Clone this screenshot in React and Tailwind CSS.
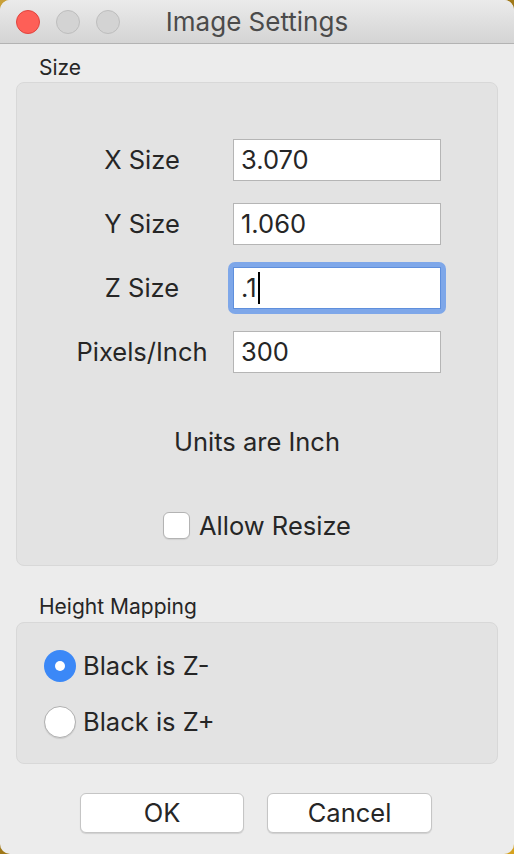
import { useState } from "react";

const FONT = { fontFamily: "Inter, 'Noto Sans', 'Liberation Sans', sans-serif" };

function Field({ label, value, focused }) {
  return (
    <div className="flex items-center h-[42px]">
      <div className="w-[250px] text-center text-[25.5px] text-[#262626] leading-none">{label}</div>
      <div className="-ml-[34px] relative">
        {focused && (
          <div className="absolute -inset-[5px] rounded-[7px] bg-[#7ea7e9]" />
        )}
        <div
          className={`relative w-[208px] h-[42px] bg-white flex items-center pl-[7px] text-[25.5px] text-[#262626] border ${
            focused ? "border-[#5f8fdc]" : "border-[#b5b5b5]"
          }`}
        >
          <span>{value}</span>
          {focused && <span className="ml-[1px] w-[2px] h-[32px] bg-black" />}
        </div>
      </div>
    </div>
  );
}

function Radio({ checked, label }) {
  return (
    <div className="flex items-center h-[32px]">
      {checked ? (
        <div className="w-[32px] h-[32px] rounded-full bg-[#3b88f7] flex items-center justify-center">
          <div className="w-[10px] h-[10px] rounded-full bg-white" />
        </div>
      ) : (
        <div className="w-[32px] h-[32px] rounded-full bg-white border border-[#b0b0b0] shadow-[0_1px_1px_rgba(0,0,0,0.1)]" />
      )}
      <span className="ml-[7px] text-[25.5px] text-[#262626]">{label}</span>
    </div>
  );
}

export default function App() {
  const [allowResize, setAllowResize] = useState(false);

  return (
    <div
      className="w-[514px] h-[854px] bg-gradient-to-br from-[#c9a03a] via-[#a07818] to-[#d6a21e]"
      style={FONT}
    >
      <div className="w-full h-full rounded-[10px] overflow-hidden bg-[#ececec] flex flex-col">
        {/* title bar */}
        <div className="h-[44px] shrink-0 bg-gradient-to-b from-[#ebebeb] to-[#d4d4d4] border-b border-[#b3b3b3] flex items-center relative">
          <div className="flex items-center gap-[16px] pl-[16px]">
            <div className="w-[24px] h-[24px] rounded-full bg-[#fe5f57] border border-[#e0443e]" />
            <div className="w-[24px] h-[24px] rounded-full bg-[#d3d3d3] border border-[#bdbdbd]" />
            <div className="w-[24px] h-[24px] rounded-full bg-[#d3d3d3] border border-[#bdbdbd]" />
          </div>
          <div className="absolute inset-0 flex items-center justify-center text-[26px] text-[#4b4b4b] pointer-events-none">
            Image Settings
          </div>
        </div>

        <div className="px-[16px] flex flex-col">
          <div className="mt-[12px] pl-[23px] h-[24px] flex items-center text-[21px] text-[#262626]">Size</div>
          <div className="mt-[2px] h-[484px] rounded-[8px] bg-[#e3e3e3] border border-[#d8d8d8] flex flex-col pt-[56px]">
            <div className="flex flex-col gap-[22px]">
              <Field label="X Size" value="3.070" />
              <Field label="Y Size" value="1.060" />
              <Field label="Z Size" value=".1" focused />
              <Field label="Pixels/Inch" value="300" />
            </div>
            <div className="mt-[55px] h-[28px] flex items-center justify-center text-[25.5px] text-[#262626]">
              Units are Inch
            </div>
            <div className="mt-[56px] h-[27px] flex items-center justify-center">
              <button
                onClick={() => setAllowResize(!allowResize)}
                className="flex items-center h-[27px]"
              >
                <span className="w-[27px] h-[27px] rounded-[6px] bg-white border border-[#b3b3b3] shadow-[0_1px_1px_rgba(0,0,0,0.08)] flex items-center justify-center text-[18px] text-[#262626]">
                  {allowResize ? "✓" : ""}
                </span>
                <span className="ml-[9px] text-[25.5px] leading-none text-[#262626]">Allow Resize</span>
              </button>
            </div>
          </div>

          <div className="mt-[29px] pl-[23px] h-[24px] flex items-center text-[21px] text-[#262626]">Height Mapping</div>
          <div className="mt-[3px] h-[142px] rounded-[8px] bg-[#e3e3e3] border border-[#d8d8d8] flex flex-col gap-[24px] pt-[27px] pl-[27px]">
            <Radio checked label="Black is Z-" />
            <Radio label="Black is Z+" />
          </div>

          <div className="mt-[29px] flex justify-center gap-[23px] -ml-[2px]">
            <button className="w-[164px] h-[40px] rounded-[6px] bg-white border border-[#c5c5c5] shadow-[0_1px_1px_rgba(0,0,0,0.12)] text-[25.5px] text-[#262626]">
              OK
            </button>
            <button className="w-[165px] h-[40px] rounded-[6px] bg-white border border-[#c5c5c5] shadow-[0_1px_1px_rgba(0,0,0,0.12)] text-[25.5px] text-[#262626]">
              Cancel
            </button>
          </div>
        </div>
      </div>
    </div>
  );
}
